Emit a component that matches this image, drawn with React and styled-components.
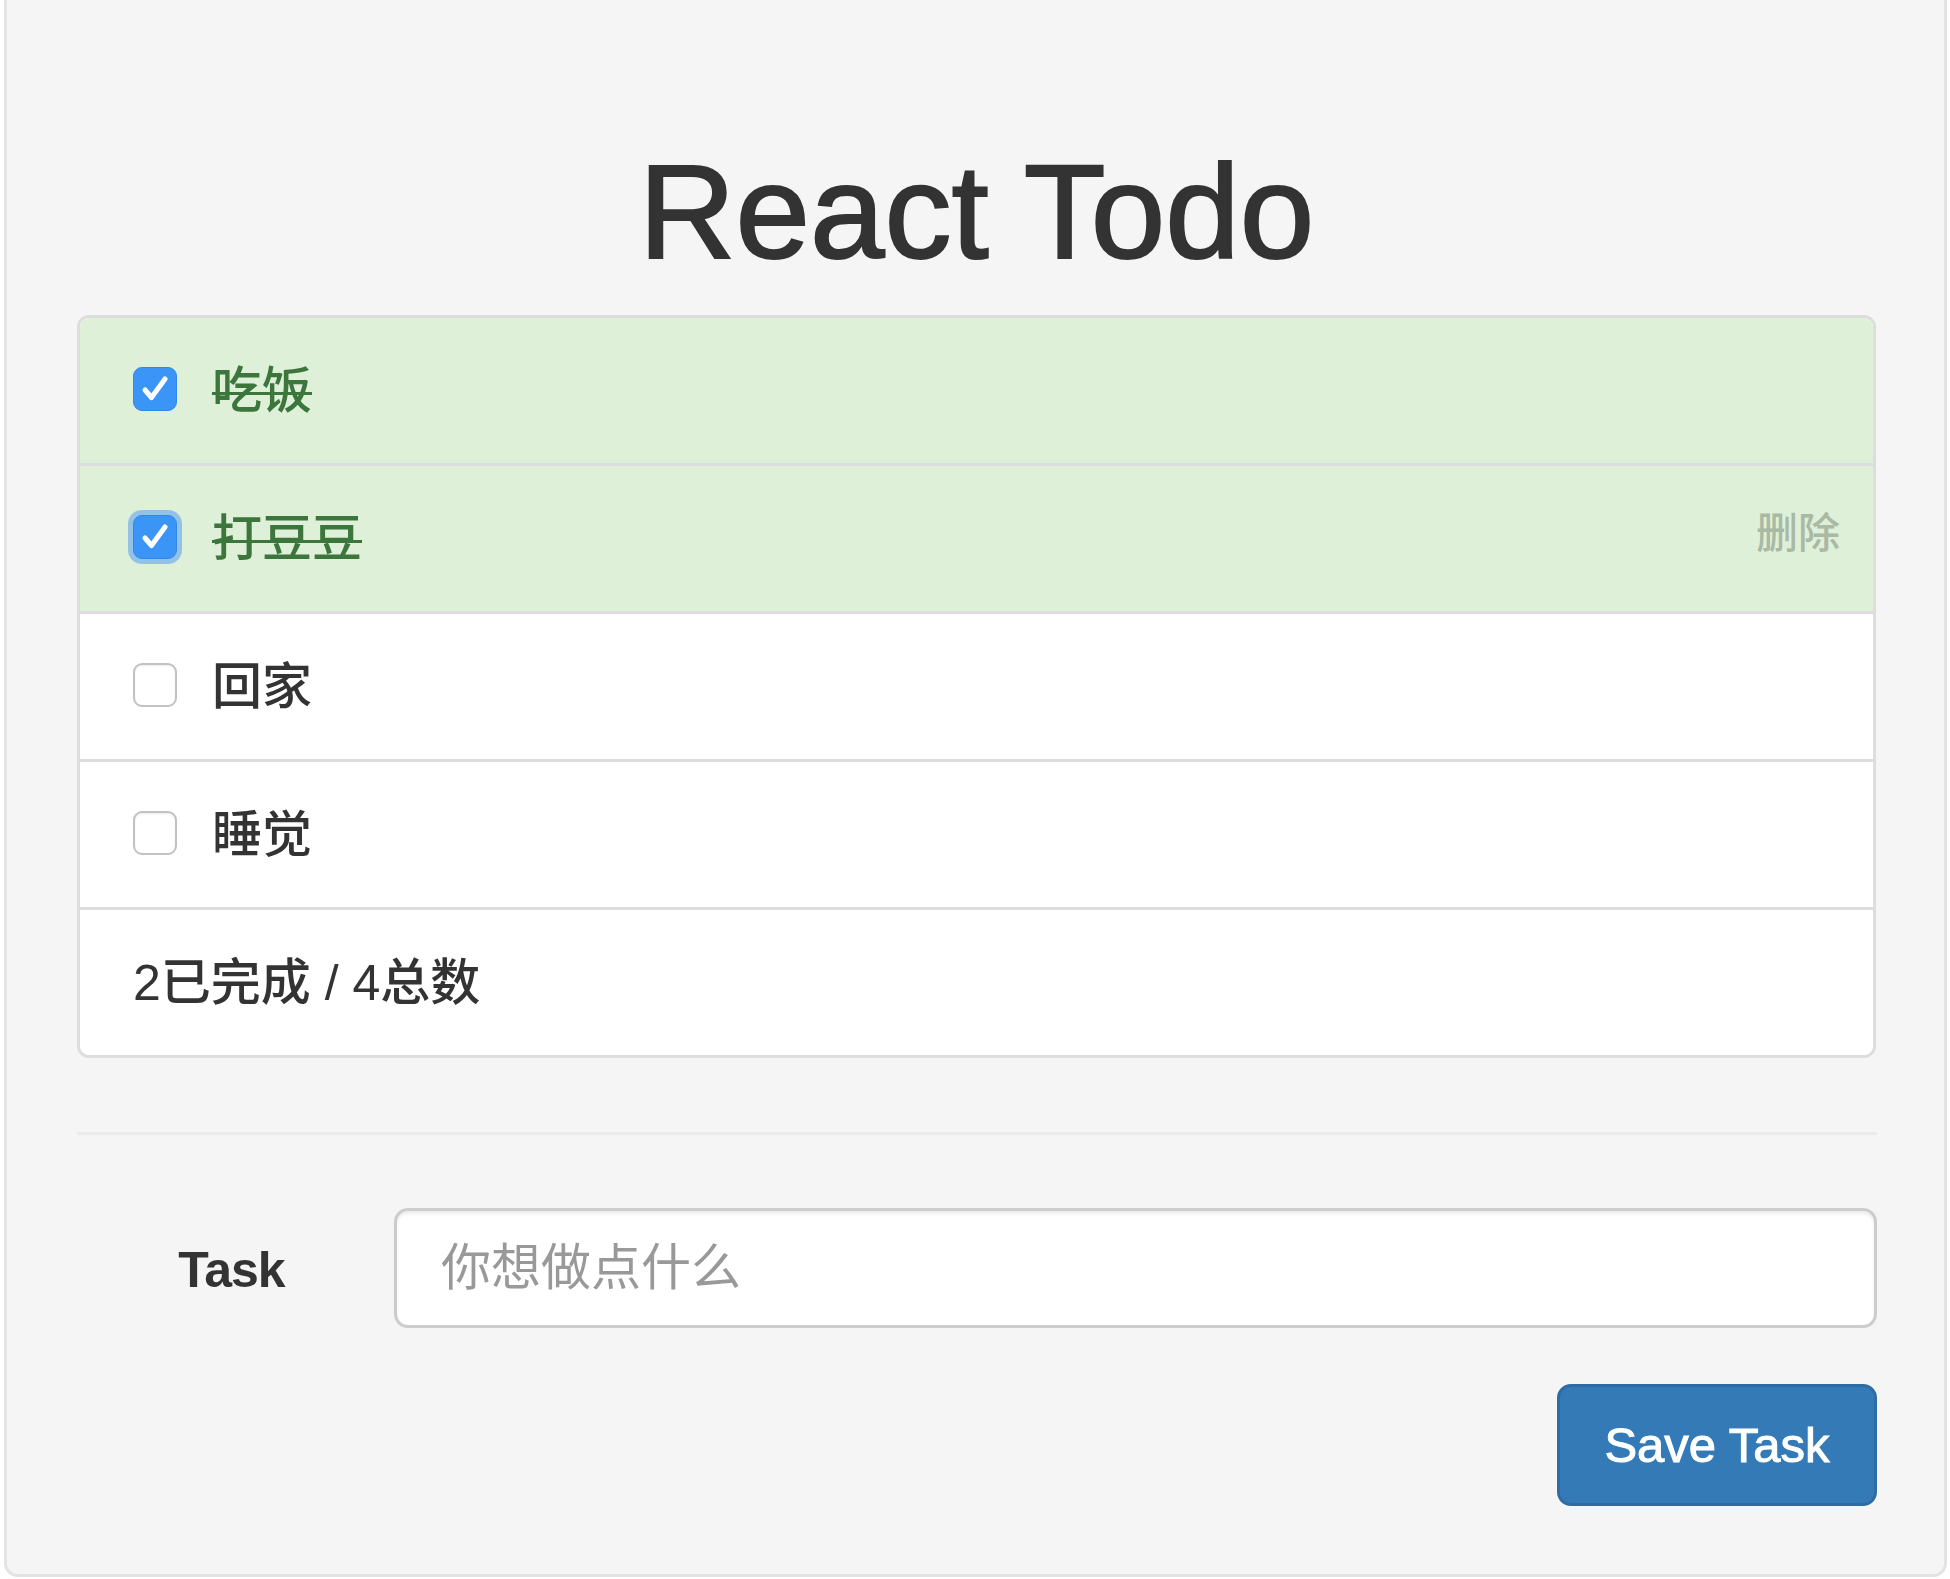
import React from "react";
import styled, { createGlobalStyle } from "styled-components";

const GlobalStyle = createGlobalStyle`
  html, body {
    margin: 0;
    padding: 0;
    background: #ffffff;
  }
  body {
    font-family: "Liberation Sans", "Noto Sans CJK SC", sans-serif;
    color: #333333;
  }
  * { box-sizing: border-box; }
`;

const Well = styled.div`
  margin-left: 4px;
  width: 1943px;
  background: #f5f5f5;
  border: 3px solid #e3e3e3;
  border-top: 0;
  border-radius: 0 0 14px 14px;
  padding: 138px 68px 68px 70px;
`;

const Title = styled.h1`
  margin: 0;
  font-family: "Liberation Sans", "Noto Sans CJK SC", sans-serif;
  font-size: 134px;
  font-weight: 400;
  letter-spacing: 0;
  -webkit-text-stroke: 2px #333333;
  line-height: 148px;
  height: 148px;
  text-align: center;
  color: #333333;
`;

const Panel = styled.div`
  margin-top: 29px;
  border: 3px solid #dddddd;
  border-radius: 12px;
  overflow: hidden;
  background: #ffffff;
`;

const Row = styled.div`
  display: flex;
  align-items: center;
  height: 145px;
  padding: 0 33px 0 53px;
  background: ${(p) => (p.$done ? "#dff0d8" : "#ffffff")};
  & + & {
    border-top: 3px solid #dddddd;
    height: 148px;
  }
`;

const Box = styled.span`
  flex: none;
  display: inline-flex;
  align-items: center;
  justify-content: center;
  width: 44px;
  height: 44px;
  border-radius: 9px;
  margin-right: 35px;
  margin-top: -3px;
  background: ${(p) => (p.$checked ? "#3a95f6" : "#ffffff")};
  border: ${(p) => (p.$checked ? "1px solid #2f89ec" : "2px solid #c2c2c2")};
  box-shadow: ${(p) =>
    p.$focused
      ? "0 0 0 5px rgba(96, 164, 240, 0.6)"
      : p.$checked
      ? "none"
      : "inset 0 1px 2px rgba(0,0,0,0.08)"};
`;

const TaskText = styled.span`
  font-family: "Liberation Sans", "Noto Sans CJK SC", sans-serif;
  font-size: 50px;
  font-weight: 500;
  line-height: 60px;
  color: ${(p) => (p.$done ? "#3c763d" : "#333333")};
  text-decoration: ${(p) => (p.$done ? "line-through" : "none")};
  text-decoration-thickness: 3px;
`;

const DeleteLink = styled.span`
  margin-left: auto;
  margin-top: -10px;
  font-family: "Liberation Sans", "Noto Sans CJK SC", sans-serif;
  font-size: 42px;
  font-weight: 500;
  line-height: 50px;
  color: #a9b9a3;
`;

const Summary = styled.span`
  font-family: "Liberation Sans", "Noto Sans CJK SC", sans-serif;
  font-size: 50px;
  font-weight: 500;
  line-height: 60px;
  color: #333333;
`;

const Divider = styled.hr`
  margin: 74px -1px 0 0;
  border: 0;
  border-top: 3px solid #ebebeb;
  height: 0;
`;

const FormRow = styled.div`
  margin-top: 73px;
  margin-right: -1px;
  display: grid;
  grid-template-columns: 317px 1fr;
  align-items: center;
`;

const Label = styled.label`
  font-family: "Liberation Sans", sans-serif;
  font-size: 50px;
  font-weight: 700;
  letter-spacing: -1px;
  color: #333333;
  text-align: center;
  padding-right: 8px;
  margin-top: 4px;
`;

const Input = styled.input`
  width: 100%;
  height: 120px;
  border: 3px solid #cccccc;
  border-radius: 14px;
  background: #ffffff;
  box-shadow: inset 0 3px 3px rgba(0, 0, 0, 0.075);
  padding: 0 44px;
  font-family: "Liberation Sans", "Noto Sans CJK SC", sans-serif;
  font-size: 50px;
  color: #555555;
  outline: none;
  &::placeholder {
    color: #999999;
  }
`;

const ButtonRow = styled.div`
  display: flex;
  justify-content: flex-end;
  margin-top: 56px;
  margin-right: -1px;
`;

const SaveButton = styled.button`
  width: 320px;
  height: 122px;
  background: #337ab7;
  border: 3px solid #2e6da4;
  border-radius: 14px;
  color: #ffffff;
  font-family: "Liberation Sans", sans-serif;
  font-size: 49px;
  -webkit-text-stroke: 1px #ffffff;
  padding: 0;
  cursor: pointer;
`;

const Check = () => (
  <svg width="42" height="42" viewBox="0 0 42 42">
    <path
      d="M11 22 L17.5 29.5 L31 11"
      fill="none"
      stroke="#ffffff"
      strokeWidth="5"
      strokeLinecap="round"
      strokeLinejoin="round"
    />
  </svg>
);

const Checkbox = ({ checked, focused }) => (
  <Box $checked={checked} $focused={focused}>
    {checked && <Check />}
  </Box>
);

const todos = [
  { text: "吃饭", done: true },
  { text: "打豆豆", done: true, focused: true, showDelete: true },
  { text: "回家", done: false },
  { text: "睡觉", done: false },
];

export default function App() {
  const doneCount = todos.filter((t) => t.done).length;
  return (
    <>
      <GlobalStyle />
      <Well>
        <Title>React Todo</Title>
        <Panel>
          {todos.map((t) => (
            <Row key={t.text} $done={t.done}>
              <Checkbox checked={t.done} focused={t.focused} />
              <TaskText $done={t.done}>{t.text}</TaskText>
              {t.showDelete && <DeleteLink>删除</DeleteLink>}
            </Row>
          ))}
          <Row>
            <Summary>
              {doneCount}已完成 / {todos.length}总数
            </Summary>
          </Row>
        </Panel>
        <Divider />
        <FormRow>
          <Label>Task</Label>
          <Input placeholder="你想做点什么" />
        </FormRow>
        <ButtonRow>
          <SaveButton>Save Task</SaveButton>
        </ButtonRow>
      </Well>
    </>
  );
}
